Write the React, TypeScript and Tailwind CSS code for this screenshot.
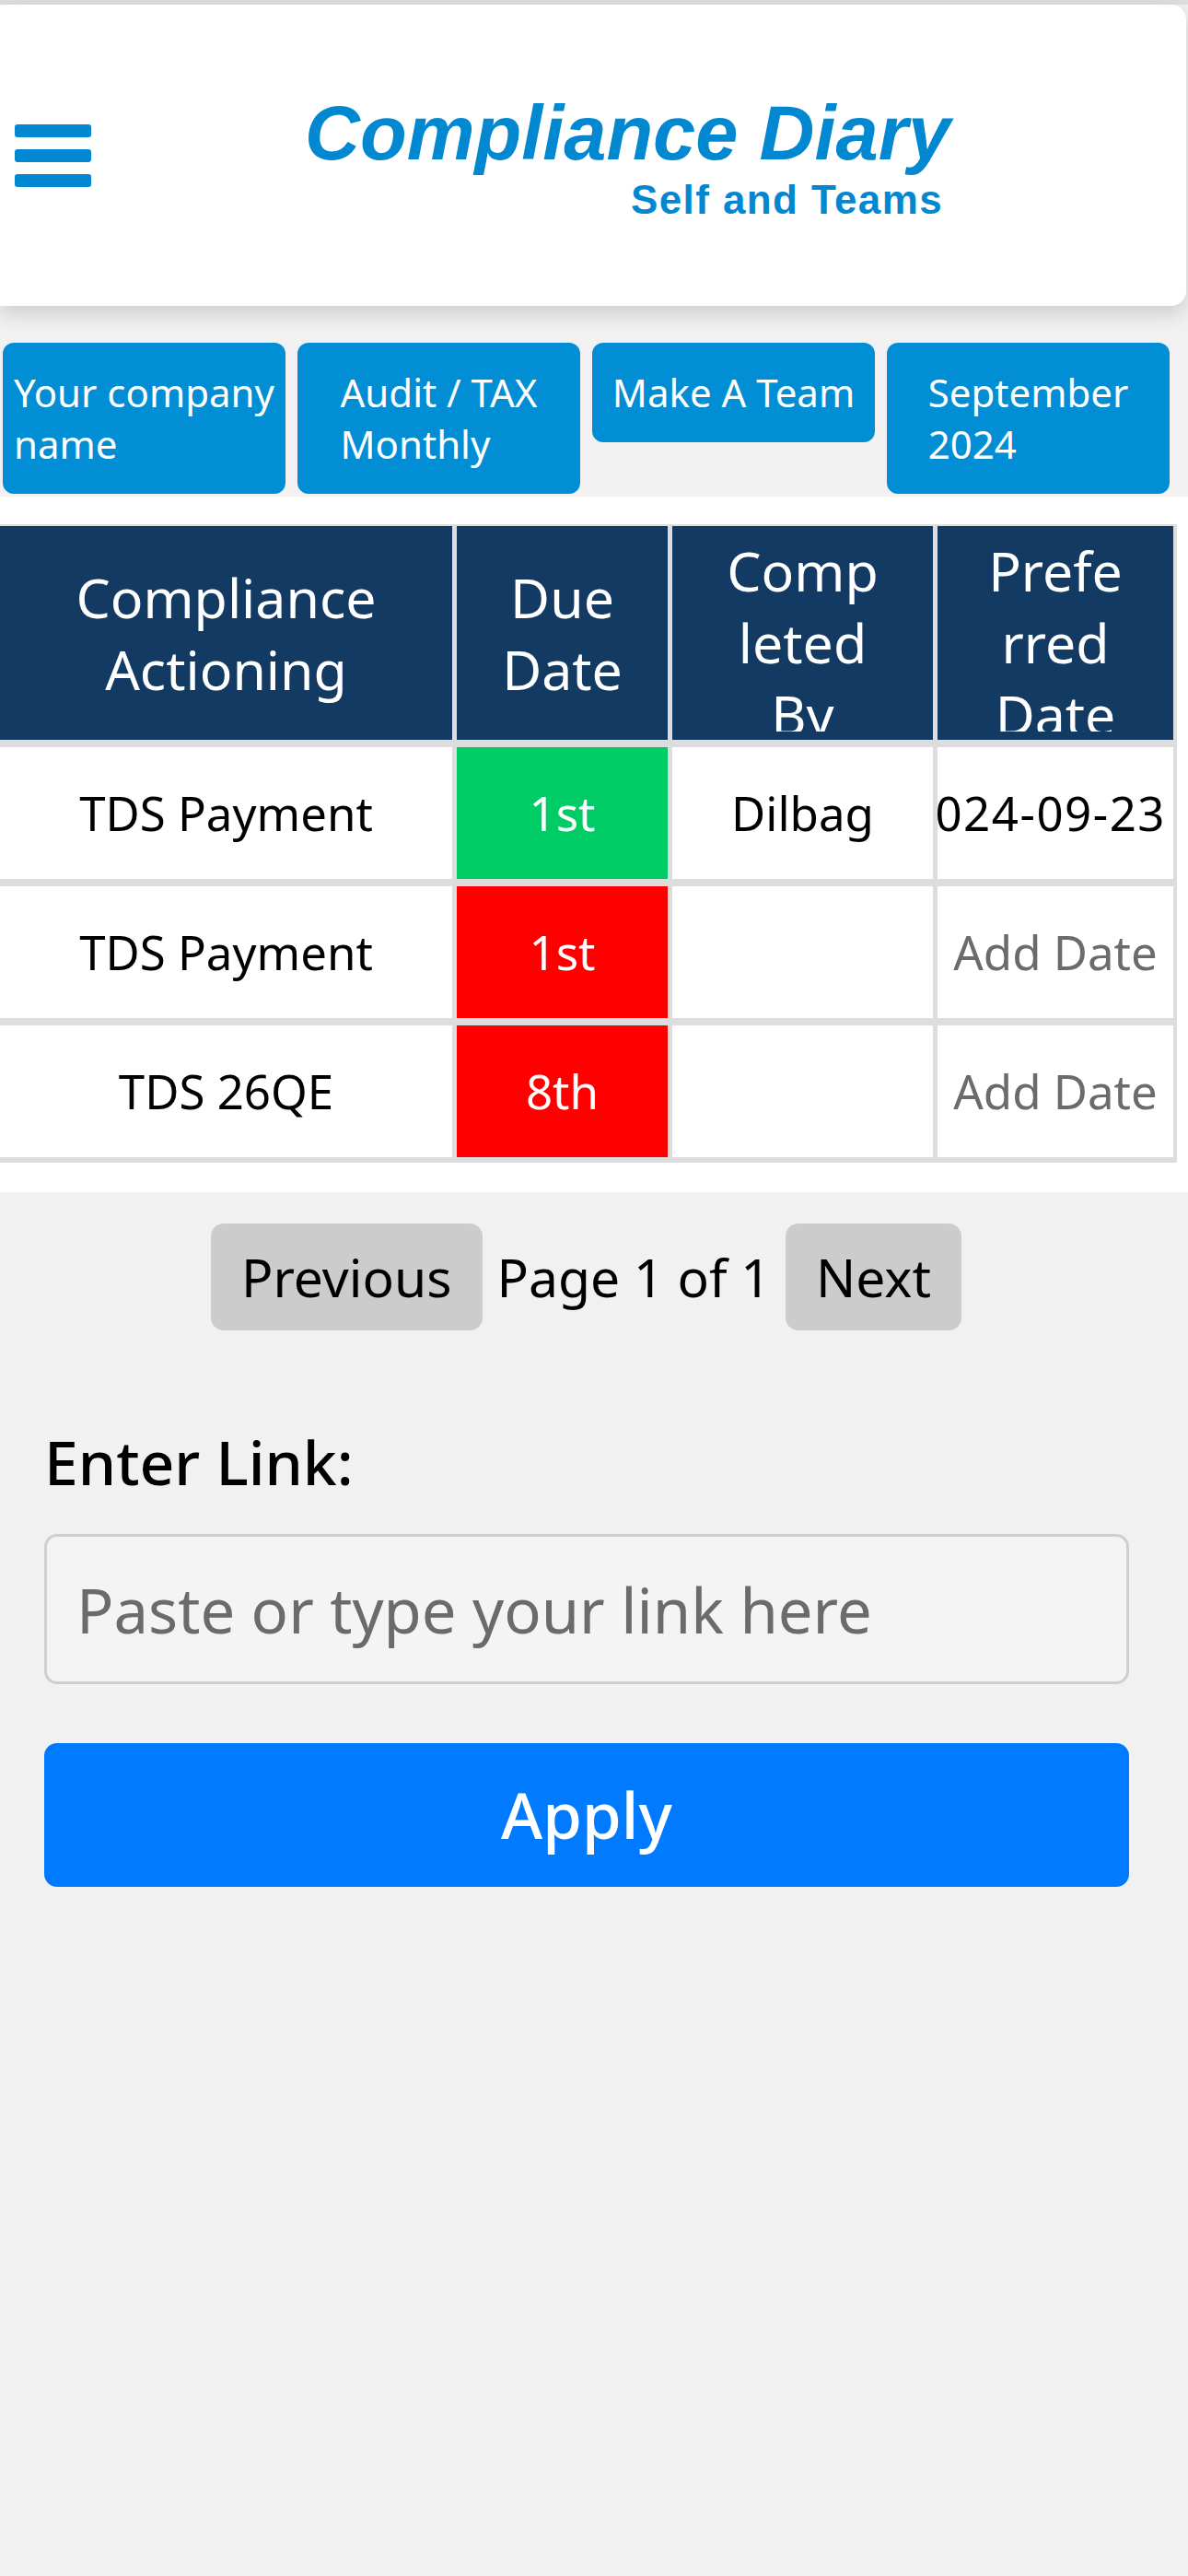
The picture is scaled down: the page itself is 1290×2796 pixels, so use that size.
import React from "react";

const ui = { fontFamily: '"Noto Sans", "Open Sans", sans-serif' };
const logo = { fontFamily: '"Liberation Sans", Arial, sans-serif' };

const navItems = [
  ["Your company", "name"],
  ["Audit / TAX", "Monthly"],
  ["Make A Team"],
  ["September", "2024"],
];

const rows = [
  { task: "TDS Payment", due: "1st", done: true, by: "Dilbag", date: "2024-09-23" },
  { task: "TDS Payment", due: "1st", done: false, by: "", date: "" },
  { task: "TDS 26QE", due: "8th", done: false, by: "", date: "" },
];

const HeadCell = ({ children, inner = "" }: { children: React.ReactNode; inner?: string }) => (
  <div className="h-[232px] bg-[#133a63] flex items-center justify-center text-white text-[59px] leading-[78px] text-center overflow-hidden">
    <div className={`max-h-[214px] overflow-hidden ${inner}`}>{children}</div>
  </div>
);

const App = () => {
  return (
    <div style={ui} className="min-h-[2796px] w-[1290px] bg-[#f1f1f1] border-t-[5px] border-[#dedede]">
      {/* header */}
      <header className="relative z-10 h-[327px] w-[1288px] bg-white rounded-r-[16px] shadow-[0_8px_22px_rgba(0,0,0,0.16)] flex items-center pl-[16px]">
        <div className="flex flex-col gap-[13px]">
          <div className="h-[14px] w-[83px] rounded-[3px] bg-[#0288d1]" />
          <div className="h-[14px] w-[83px] rounded-[3px] bg-[#0288d1]" />
          <div className="h-[14px] w-[83px] rounded-[3px] bg-[#0288d1]" />
        </div>
        <div style={logo} className="ml-[232px] flex flex-col items-end text-[#0288d1] font-bold">
          <div className="text-[83px] leading-[95px] italic">Compliance Diary</div>
          <div className="mt-[1px] pr-[8px] text-[44px] leading-[48px] tracking-[1.4px]">Self and Teams</div>
        </div>
      </header>

      {/* top buttons */}
      <nav className="flex items-start gap-[13px] pl-[3px] pt-[40px] pb-[3px]">
        {navItems.map((lines) => (
          <button
            key={lines[0]}
            className="w-[307px] rounded-[12px] bg-[#028ed4] py-[26px] flex justify-center text-white text-[42px] leading-[56px]"
          >
            <span className="text-left whitespace-nowrap">
              {lines.map((l, i) => (
                <span key={i} className="block">
                  {l}
                </span>
              ))}
            </span>
          </button>
        ))}
      </nav>

      {/* table */}
      <section className="bg-white pt-[30px] pb-[32px]">
        <div className="w-[1278px] grid grid-cols-[491px_229px_283px_256px] gap-x-[5px] gap-y-[8px] bg-[#dddddd] pt-[2px] pr-[3px] pb-[6px]">
          <HeadCell inner="px-[20px]">Compliance Actioning</HeadCell>
          <HeadCell inner="px-[6px]">Due Date</HeadCell>
          <HeadCell inner="w-[170px] break-all">Completed By</HeadCell>
          <HeadCell inner="w-[157px] break-all">Preferred Date</HeadCell>

          {rows.map((r, i) => (
            <React.Fragment key={i}>
              <div className="h-[143px] bg-white flex items-center justify-center text-[51px] text-black">
                {r.task}
              </div>
              <div
                className={`h-[143px] flex items-center justify-center text-[51px] text-white ${
                  r.done ? "bg-[#00cc66]" : "bg-[#ff0000]"
                }`}
              >
                {r.due}
              </div>
              <div className="h-[143px] bg-white flex items-center justify-center text-[51px] text-black">
                {r.by}
              </div>
              {r.date ? (
                <div className="h-[143px] bg-white flex items-center justify-end overflow-hidden pr-[8px] text-[51px] text-black">
                  <span className="shrink-0 whitespace-nowrap tracking-[1.5px]">{r.date}</span>
                </div>
              ) : (
                <div className="h-[143px] bg-white flex items-center justify-center text-[51px] text-[#6b6b6b]">
                  Add Date
                </div>
              )}
            </React.Fragment>
          ))}
        </div>
      </section>

      {/* pagination */}
      <div className="pt-[34px] pr-[17px] flex items-center justify-center gap-[16px] text-[57px] leading-[64px] text-black">
        <button className="rounded-[14px] bg-[#cccccc] px-[33px] py-[26px]">Previous</button>
        <span>Page 1 of 1</span>
        <button className="rounded-[14px] bg-[#cccccc] px-[33px] py-[26px]">Next</button>
      </div>

      {/* link form */}
      <div className="mt-[102px] ml-[48px] w-[1178px] flex flex-col">
        <label className="text-[66px] leading-[80px] font-medium text-black">Enter Link:</label>
        <input
          type="text"
          placeholder="Paste or type your link here"
          className="mt-[39px] h-[163px] w-full rounded-[14px] border-[3px] border-[#cfcfcf] bg-[#f4f4f4] px-[32px] text-[67px] text-black placeholder:text-[#6b6b6b] outline-none"
        />
        <button className="mt-[64px] h-[156px] w-full rounded-[14px] bg-[#007bff] text-white text-[69px] font-medium">
          Apply
        </button>
      </div>
    </div>
  );
};

export default App;
